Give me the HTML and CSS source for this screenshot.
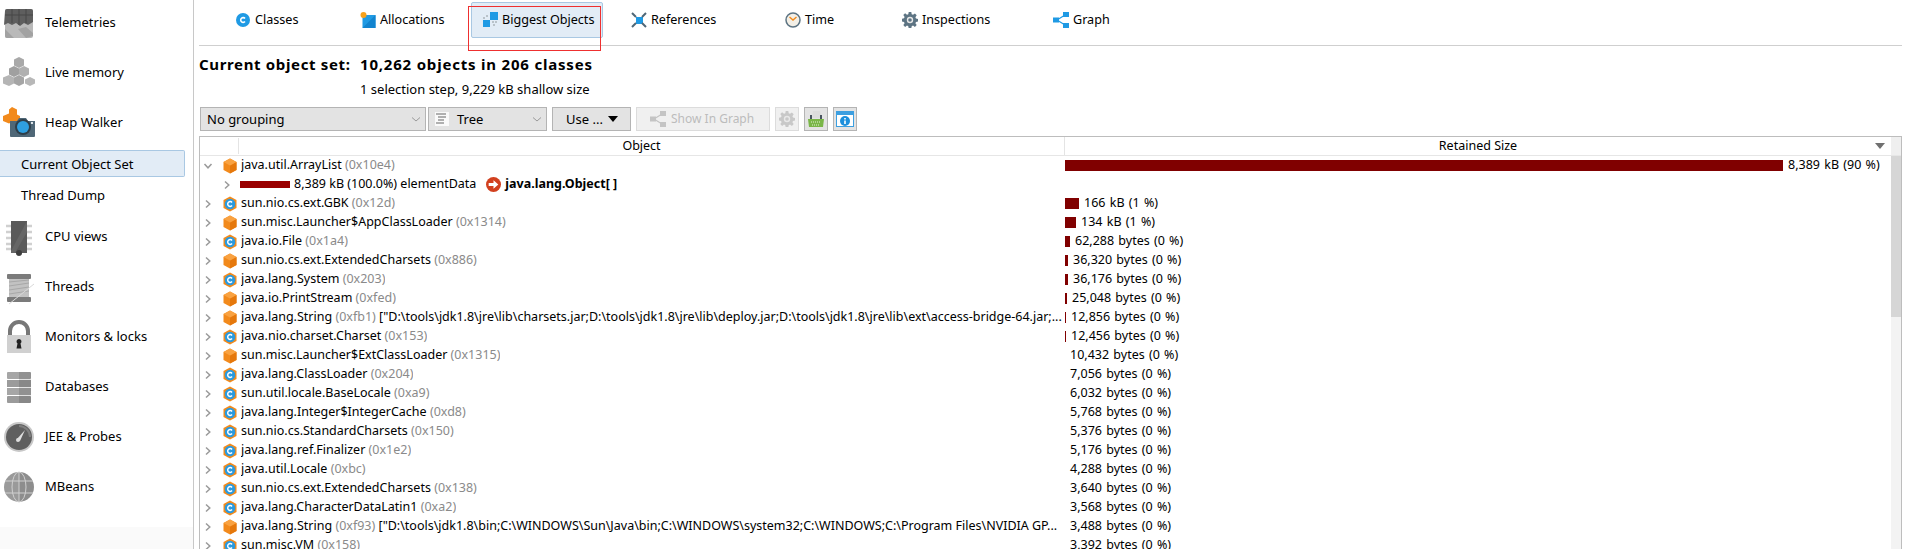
FILE: index.html
```html
<!DOCTYPE html>
<html lang="en">
<head>
<meta charset="utf-8">
<title>Heap Walker</title>
<link rel="stylesheet" href="styles.css">
</head>
<body>
<svg class="defs" aria-hidden="true">
  <symbol id="obj" viewBox="0 0 16 16"><path d="M8 .5 14.5 4v8L8 15.5 1.500 12V4z" fill="#f28a1c"/><path d="M8 7.500 14.500 4v8L8 15.500z" fill="#e5780c"/><path d="M8 .5 14.500 4 8 7.500 1.500 4z" fill="#f9a241"/></symbol>
  <symbol id="cls" viewBox="0 0 16 16"><path d="M8 .5 14.500 4v8L8 15.500 1.500 12V4z" fill="#f28a1c"/><circle cx="8" cy="8" r="5.300" fill="#2b9ade"/><path d="M10 6.500A2.400 2.400 0 1 0 10 9.500" fill="none" stroke="#fff" stroke-width="1.500"/></symbol>
  <symbol id="chev" viewBox="0 0 10 10"><path d="M3 1.500 6.800 5 3 8.500" fill="none" stroke="#9a9a9a" stroke-width="1.500"/></symbol>
  <symbol id="chevd" viewBox="0 0 10 10"><path d="M1.500 3 5 6.800 8.500 3" fill="none" stroke="#9a9a9a" stroke-width="1.500"/></symbol>
  <symbol id="caret" viewBox="0 0 10 10"><path d="M1 3.500 5 7 9 3.500" fill="none" stroke="#9a9a9a" stroke-width="1"/></symbol>
  <symbol id="graph" viewBox="0 0 16 16"><path d="M4 8 12 3M4 8l8 5" stroke="currentColor" stroke-width="1.200" fill="none"/><path d="M0 5.500h6v5H0zM10 0h6v5h-6zM10 11h6v5h-6z" fill="currentColor"/></symbol>
  <symbol id="gear" viewBox="0 0 16 16"><path d="M6.700 0h2.600l.4 2.200 1.300.6 1.900-1.300 1.800 1.800-1.300 1.900.6 1.300 2 .4v2.600l-2 .4-.6 1.300 1.300 1.900-1.800 1.800-1.900-1.300-1.300.6-.4 2.200H6.700l-.4-2.200-1.300-.6-1.900 1.300-1.800-1.800 1.300-1.900-.6-1.300-2-.4V6.700l2-.4.600-1.300-1.300-1.900 1.800-1.800L5 2.800l1.300-.6z" fill="currentColor"/><circle cx="8" cy="8" r="3.200" fill="#e8e8e8"/><circle cx="8" cy="8" r="1.800" fill="currentColor"/></symbol>
</svg>
<div class="app">
  <nav class="sidebar">
    <div class="side-item">
      <svg class="side-icon" viewBox="0 0 32 32"><g transform="translate(-1 0)"><rect x="3" y="2" width="28" height="29" rx="2" fill="#b9b9b9"/><path d="M3 4a2 2 0 0 1 2-2h24a2 2 0 0 1 2 2v11l-5 3-4-2-4 3-4-3-4 2-4-2-4 2z" fill="#5e5e5e"/><path d="M3 8h28M10 2v14M17 2v16M24 2v14" stroke="#474747"/><path d="M3 22l9 9H5a2 2 0 0 1-2-2zM16 22l8-2 7 6v3l-7 2z" fill="#a2a2a2"/></g></svg>
      <span>Telemetries</span>
    </div>
    <div class="side-item">
      <svg class="side-icon" viewBox="0 0 32 32"><path d="M16 0l5 2.500v6L16 11l-5-2.500v-6z" fill="#a9a9a9"/><path d="M11 9l5 2.500v6L11 20l-5-2.500v-6z" fill="#a0a0a0"/><path d="M21 9l5 2.500v6L21 20l-5-2.500v-6z" fill="#b0b0b0"/><path d="M6 18l5 2.500v6L6 29l-6-2.500v-6z" fill="#b5b5b5"/><path d="M16 18l5 2.500v6L16 29l-5-2.500v-6z" fill="#a5a5a5"/><path d="M27 20l5 2.500v4L27 29l-5-2.500v-4z" fill="#b8b8b8"/></svg>
      <span>Live memory</span>
    </div>
    <div class="side-item">
      <svg class="side-icon" viewBox="0 0 32 32"><path d="M9 0l5 2.500v5l3 1.500v5l-5 2.500-3-1.500-3 1.500-6-2.500v-5l6-2.500v-4z" fill="#f28a1c"/><path d="M7 14h7l2-3h7l2 3h7v15a1 1 0 0 1-1 1H8a1 1 0 0 1-1-1z" fill="#4f6777"/><circle cx="20" cy="20" r="8" fill="#2e3e49"/><circle cx="20" cy="20" r="6" fill="#2f9fe0"/><rect x="28" y="15" width="2" height="2" fill="#dfe5ea"/></svg>
      <span>Heap Walker</span>
    </div>
    <div class="sub-item sub-active">Current Object Set</div>
    <div class="sub-item sub-last">Thread Dump</div>
    <div class="side-item">
      <svg class="side-icon" viewBox="0 0 32 32"><path d="M3 5h26M3 11h26M3 17h26M3 23h26M3 28h26" stroke="#d0d0d0" stroke-width="2.500"/><rect x="8" y="0" width="16" height="32" fill="#5a5a5a"/><path d="M24 0v11L12 32H8V30z" fill="#6e6e6e" opacity=".6"/><circle cx="16" cy="32" r="3" fill="#3e3e3e"/></svg>
      <span>CPU views</span>
    </div>
    <div class="side-item">
      <svg class="side-icon" viewBox="0 0 32 32"><rect x="4" y="3" width="24" height="5" rx="1" fill="#7b7b7b"/><rect x="6" y="8" width="20" height="18" fill="#c2c2c2"/><path d="M6 11l20-2M6 15l20-3M6 19l20-3M6 23l20-3" stroke="#a8a8a8"/><rect x="4" y="26" width="24" height="5" rx="1" fill="#7b7b7b"/><path d="M6 33 31 13" stroke="#d9d9d9"/></svg>
      <span>Threads</span>
    </div>
    <div class="side-item">
      <svg class="side-icon" viewBox="0 0 32 32"><path d="M7 15V10a9 9 0 0 1 18 0v5" fill="none" stroke="#777" stroke-width="4"/><rect x="4" y="14" width="24" height="18" fill="#d0d0d0"/><path d="M16 18a2.500 2.500 0 0 1 1.500 4.500l1 5h-5l1-5A2.500 2.500 0 0 1 16 18z" fill="#222"/></svg>
      <span>Monitors &amp; locks</span>
    </div>
    <div class="side-item">
      <svg class="side-icon" viewBox="0 0 32 32"><rect x="4" y="1" width="24" height="7" rx="1" fill="#a6a6a6"/><rect x="4" y="9" width="24" height="7" fill="#9b9b9b"/><rect x="4" y="17" width="24" height="7" fill="#a6a6a6"/><rect x="4" y="25" width="24" height="7" rx="1" fill="#9b9b9b"/><path d="M16 1h11a1 1 0 0 1 1 1v29a1 1 0 0 1-1 1H16z" fill="#000" opacity=".12"/></svg>
      <span>Databases</span>
    </div>
    <div class="side-item">
      <svg class="side-icon" viewBox="0 0 32 32"><circle cx="16" cy="16" r="15" fill="#c8c8c8"/><circle cx="16" cy="16" r="13" fill="#5f5f5f"/><path d="M16 5a11 11 0 0 1 11 11" fill="none" stroke="#7e7e7e" stroke-width="2"/><path d="M14 18l8-9-5 11z" fill="#dedede"/><circle cx="15" cy="19" r="2" fill="#dedede"/></svg>
      <span>JEE &amp; Probes</span>
    </div>
    <div class="side-item">
      <svg class="side-icon" viewBox="0 0 32 32"><circle cx="16" cy="16" r="15" fill="#9a9a9a"/><path d="M16 1a15 15 0 0 1 0 30z" fill="#000" opacity=".08"/><path d="M2 10h28M2 22h28M16 1v30" stroke="#d0d0d0"/><ellipse cx="16" cy="16" rx="7" ry="15" fill="none" stroke="#d0d0d0"/></svg>
      <span>MBeans</span>
    </div>
    <div class="side-fill"></div>
  </nav>
  <main class="main">
    <div class="tabs">
      <div class="tab"><svg class="tab-icon" viewBox="0 0 16 16"><circle cx="8" cy="8" r="7" fill="#1f9ae4"/><path d="M10 6.500A2.400 2.400 0 1 0 10 9.500" fill="none" stroke="#fff" stroke-width="1.600"/></svg>Classes</div>
      <div class="tab"><svg class="tab-icon" viewBox="0 0 16 16"><rect x="2.500" y="3" width="13" height="13" fill="#1f9ae4"/><path d="M15.500 3v13H2.500z" fill="#1284cf"/><circle cx="3.500" cy="3" r="3" fill="#f7a11c"/></svg>Allocations</div>
      <div class="tab"><div class="tab-active"><svg class="tab-icon" viewBox="0 0 16 16"><rect x="8" y="0" width="8" height="8" fill="#1f9ae4"/><rect x="1" y="8" width="7" height="7" fill="#1f9ae4"/><path d="M4 3h2v2H4zM1 5h2v2H1zM10 9h2v2h-2zM13 9h2v2h-2zM11 12h2v2h-2z" fill="#b9c2c9"/></svg>Biggest Objects</div></div>
      <div class="tab"><svg class="tab-icon" viewBox="0 0 16 16"><rect x="5" y="5" width="7" height="7" fill="#1f9ae4"/><path d="M1 1l4 4M15 1l-4 4M1 15l4-4M15 15l-4-4" stroke="#4f6777" stroke-width="2"/></svg>References</div>
      <div class="tab"><svg class="tab-icon" viewBox="0 0 16 16"><circle cx="8" cy="8" r="7" fill="#f3efe6" stroke="#5d7483" stroke-width="1.500"/><path d="M4.500 5 8 8l3.500-3" fill="none" stroke="#f28a1c" stroke-width="1.400"/></svg>Time</div>
      <div class="tab"><svg class="tab-icon tab-gear"><use href="#gear"/></svg>Inspections</div>
      <div class="tab"><svg class="tab-icon tab-graph"><use href="#graph"/></svg>Graph</div>
    </div>
    <div class="summary">
      <div class="sum-title">Current object set:</div>
      <div class="sum-title sum-value">10,262 objects in 206 classes</div>
      <div></div>
      <div class="sum-sub">1 selection step, 9,229 kB shallow size</div>
    </div>
    <div class="toolbar">
      <div class="ctl ctl-group">No grouping<svg class="ctl-caret"><use href="#caret"/></svg></div>
      <div class="ctl ctl-tree"><svg class="tree-icon" viewBox="0 0 14 14"><rect width="14" height="14" fill="#fafafa"/><path d="M1 2h10M3 5h8M3 8h6M1 11h8" stroke="#666"/></svg>Tree<svg class="ctl-caret"><use href="#caret"/></svg></div>
      <div class="ctl ctl-use">Use ...<span class="use-arrow"></span></div>
      <div class="ctl ctl-show"><svg class="show-icon"><use href="#graph"/></svg>Show In Graph</div>
      <div class="ctl ctl-sq ctl-off"><svg class="sq-gear"><use href="#gear"/></svg></div>
      <div class="ctl ctl-sq"><svg class="sq-icon" viewBox="0 0 18 18"><path d="M6 1h7l2 7H5z" fill="#dcdcdc"/><path d="M3 5h2v4H3zM13 5h2v4h-2z" fill="#4a5560"/><path d="M1 9h16l-1 8H2z" fill="#7ab648"/><path d="M4 12h10M5 15h8" stroke="#e4f0d8" stroke-dasharray="1 1"/></svg></div>
      <div class="ctl ctl-sq"><svg class="sq-icon" viewBox="0 0 18 18"><rect x=".5" y="1.500" width="17" height="15" fill="#fff" stroke="#3c9fe0"/><rect x="1" y="2" width="16" height="3" fill="#3c9fe0"/><circle cx="9" cy="11" r="5" fill="#1c8fdc"/><path d="M9 8v1.500M9 10.500v3.500" stroke="#fff" stroke-width="1.600"/></svg></div>
    </div>
    <section class="table">
      <div class="thead">
        <div class="th-stub"></div>
        <div class="th th-object">Object</div>
        <div class="th th-size">Retained Size</div>
        <div class="th-corner"></div>
      </div>
      <div class="tbody">
        <div class="rows">
          <div class="row"><div class="obj"><svg class="tw"><use href="#chevd"/></svg><svg class="oi"><use href="#obj"/></svg><span class="nm">java.util.ArrayList <i>(0x10e4)</i></span></div><div class="size"><b class="bar" style="width:718px"></b><span>8,389 kB (90 %)</span></div></div>
          <div class="row"><div class="obj obj-child"><svg class="tw"><use href="#chev"/></svg><b class="cbar"></b><span class="cval">8,389 kB (100.0%) elementData</span><svg class="ref" viewBox="0 0 14 14"><circle cx="7" cy="7" r="7" fill="#d2401f"/><path d="M2.500 5.500h4.500V3l4.500 4L7 11V8.500H2.500z" fill="#fff"/></svg><strong>java.lang.Object[ ]</strong></div><div class="size"></div></div>
          <div class="row"><div class="obj"><svg class="tw"><use href="#chev"/></svg><svg class="oi"><use href="#cls"/></svg><span class="nm">sun.nio.cs.ext.GBK <i>(0x12d)</i></span></div><div class="size"><b class="bar" style="width:14px"></b><span>166 kB (1 %)</span></div></div>
          <div class="row"><div class="obj"><svg class="tw"><use href="#chev"/></svg><svg class="oi"><use href="#obj"/></svg><span class="nm">sun.misc.Launcher$AppClassLoader <i>(0x1314)</i></span></div><div class="size"><b class="bar" style="width:11px"></b><span>134 kB (1 %)</span></div></div>
          <div class="row"><div class="obj"><svg class="tw"><use href="#chev"/></svg><svg class="oi"><use href="#cls"/></svg><span class="nm">java.io.File <i>(0x1a4)</i></span></div><div class="size"><b class="bar" style="width:5px"></b><span>62,288 bytes (0 %)</span></div></div>
          <div class="row"><div class="obj"><svg class="tw"><use href="#chev"/></svg><svg class="oi"><use href="#obj"/></svg><span class="nm">sun.nio.cs.ext.ExtendedCharsets <i>(0x886)</i></span></div><div class="size"><b class="bar" style="width:3px"></b><span>36,320 bytes (0 %)</span></div></div>
          <div class="row"><div class="obj"><svg class="tw"><use href="#chev"/></svg><svg class="oi"><use href="#cls"/></svg><span class="nm">java.lang.System <i>(0x203)</i></span></div><div class="size"><b class="bar" style="width:3px"></b><span>36,176 bytes (0 %)</span></div></div>
          <div class="row"><div class="obj"><svg class="tw"><use href="#chev"/></svg><svg class="oi"><use href="#obj"/></svg><span class="nm">java.io.PrintStream <i>(0xfed)</i></span></div><div class="size"><b class="bar" style="width:2px"></b><span>25,048 bytes (0 %)</span></div></div>
          <div class="row"><div class="obj"><svg class="tw"><use href="#chev"/></svg><svg class="oi"><use href="#obj"/></svg><span class="nm">java.lang.String <i>(0xfb1)</i> ["D:\tools\jdk1.8\jre\lib\charsets.jar;D:\tools\jdk1.8\jre\lib\deploy.jar;D:\tools\jdk1.8\jre\lib\ext\access-bridge-64.jar;...</span></div><div class="size"><b class="bar" style="width:1px"></b><span>12,856 bytes (0 %)</span></div></div>
          <div class="row"><div class="obj"><svg class="tw"><use href="#chev"/></svg><svg class="oi"><use href="#cls"/></svg><span class="nm">java.nio.charset.Charset <i>(0x153)</i></span></div><div class="size"><b class="bar" style="width:1px"></b><span>12,456 bytes (0 %)</span></div></div>
          <div class="row"><div class="obj"><svg class="tw"><use href="#chev"/></svg><svg class="oi"><use href="#obj"/></svg><span class="nm">sun.misc.Launcher$ExtClassLoader <i>(0x1315)</i></span></div><div class="size size-nobar"><span>10,432 bytes (0 %)</span></div></div>
          <div class="row"><div class="obj"><svg class="tw"><use href="#chev"/></svg><svg class="oi"><use href="#cls"/></svg><span class="nm">java.lang.ClassLoader <i>(0x204)</i></span></div><div class="size size-nobar"><span>7,056 bytes (0 %)</span></div></div>
          <div class="row"><div class="obj"><svg class="tw"><use href="#chev"/></svg><svg class="oi"><use href="#cls"/></svg><span class="nm">sun.util.locale.BaseLocale <i>(0xa9)</i></span></div><div class="size size-nobar"><span>6,032 bytes (0 %)</span></div></div>
          <div class="row"><div class="obj"><svg class="tw"><use href="#chev"/></svg><svg class="oi"><use href="#cls"/></svg><span class="nm">java.lang.Integer$IntegerCache <i>(0xd8)</i></span></div><div class="size size-nobar"><span>5,768 bytes (0 %)</span></div></div>
          <div class="row"><div class="obj"><svg class="tw"><use href="#chev"/></svg><svg class="oi"><use href="#cls"/></svg><span class="nm">sun.nio.cs.StandardCharsets <i>(0x150)</i></span></div><div class="size size-nobar"><span>5,376 bytes (0 %)</span></div></div>
          <div class="row"><div class="obj"><svg class="tw"><use href="#chev"/></svg><svg class="oi"><use href="#cls"/></svg><span class="nm">java.lang.ref.Finalizer <i>(0x1e2)</i></span></div><div class="size size-nobar"><span>5,176 bytes (0 %)</span></div></div>
          <div class="row"><div class="obj"><svg class="tw"><use href="#chev"/></svg><svg class="oi"><use href="#cls"/></svg><span class="nm">java.util.Locale <i>(0xbc)</i></span></div><div class="size size-nobar"><span>4,288 bytes (0 %)</span></div></div>
          <div class="row"><div class="obj"><svg class="tw"><use href="#chev"/></svg><svg class="oi"><use href="#cls"/></svg><span class="nm">sun.nio.cs.ext.ExtendedCharsets <i>(0x138)</i></span></div><div class="size size-nobar"><span>3,640 bytes (0 %)</span></div></div>
          <div class="row"><div class="obj"><svg class="tw"><use href="#chev"/></svg><svg class="oi"><use href="#cls"/></svg><span class="nm">java.lang.CharacterDataLatin1 <i>(0xa2)</i></span></div><div class="size size-nobar"><span>3,568 bytes (0 %)</span></div></div>
          <div class="row"><div class="obj"><svg class="tw"><use href="#chev"/></svg><svg class="oi"><use href="#obj"/></svg><span class="nm">java.lang.String <i>(0xf93)</i> ["D:\tools\jdk1.8\bin;C:\WINDOWS\Sun\Java\bin;C:\WINDOWS\system32;C:\WINDOWS;C:\Program Files\NVIDIA GP...</span></div><div class="size size-nobar"><span>3,488 bytes (0 %)</span></div></div>
          <div class="row"><div class="obj"><svg class="tw"><use href="#chev"/></svg><svg class="oi"><use href="#cls"/></svg><span class="nm">sun.misc.VM <i>(0x158)</i></span></div><div class="size size-nobar"><span>3,392 bytes (0 %)</span></div></div>
        </div>
        <div class="scroll"><div class="thumb"></div></div>
      </div>
    </section>
    <div class="red-box"></div>
  </main>
</div>
</body>
</html>
```
FILE: styles.css
```css
* { box-sizing: border-box; }
html, body { margin: 0; height: 549px; overflow: hidden; background: #fff; }
body { font: 12.500px/18px "Noto Sans", "Open Sans", sans-serif; color: #000; }
.defs { display: block; width: 0; height: 0; }

.app { display: flex; height: 549px; }

.sidebar { width: 194px; flex: none; border-right: 1px solid #c8c8c8; display: flex; flex-direction: column; gap: 4px; }
.side-item { height: 46px; flex: none; display: flex; align-items: center; gap: 10px; padding-left: 3px; font-size: 13px; }
.side-item span { margin-bottom: 2px; }
.side-icon { width: 32px; height: 32px; flex: none; overflow: visible; }
.sub-item { height: 27px; flex: none; display: flex; align-items: center; padding-left: 21px; width: 185px; font-size: 13px; }
.sub-active { background: #e2ecf6; border: 1px solid #a9c8e3; border-left: 0; border-radius: 0 2px 2px 0; }
.sub-last { margin-bottom: 2px; }
.side-fill { flex: 1; margin-top: 2px; background: linear-gradient(#fff 0, #fff 11px, #fafafa 11px); }

.main { flex: 1; min-width: 0; padding: 0 5px 0 5px; display: flex; flex-direction: column; position: relative; }

.tabs { height: 46px; flex: none; padding: 2px 0 0 26px; border-bottom: 1px solid #cfcfcf; display: grid; grid-template-columns: 125px 121px 150px 154px 117px 151px auto; font-size: 12.600px; }
.tab { height: 36px; padding-left: 10px; display: flex; align-items: center; gap: 4px; }
.tab:nth-child(3) { padding-left: 0; }
.tab-active { width: 132px; height: 36px; padding-left: 10px; display: flex; align-items: center; gap: 4px; background: #e2ecf6; border: 1px solid #a9c8e3; border-radius: 2px; }
.tab-icon { width: 16px; height: 16px; flex: none; }
.tab-gear { color: #5d7483; }
.tab-graph { color: #1f9ae4; }

.summary { flex: none; padding-top: 8px; display: grid; grid-template-columns: 161px 1fr; }
.sum-title { height: 20px; font-weight: 700; font-size: 15px; line-height: 20px; letter-spacing: .65px; white-space: nowrap; }
.sum-value { letter-spacing: .8px; }
.sum-sub { margin-top: 6px; height: 18px; font-size: 13px; }

.toolbar { flex: none; height: 24px; margin: 9px 0 5px 1px; display: flex; font-size: 13px; }
.ctl { height: 24px; flex: none; display: flex; align-items: center; background: #e3e3e3; border: 1px solid #b4b4b4; }
.ctl-group { width: 226px; padding-left: 6px; justify-content: space-between; padding-right: 4px; margin-right: 2px; }
.ctl-tree { width: 119px; padding-left: 6px; gap: 8px; margin-right: 5px; padding-right: 4px; }
.ctl-caret { width: 10px; height: 10px; }
.ctl-tree .ctl-caret { margin-left: auto; }
.tree-icon { width: 14px; height: 14px; }
.ctl-use { width: 79px; padding-left: 13px; gap: 5px; margin-right: 5px; }
.use-arrow { width: 0; height: 0; border: 5px solid transparent; border-top: 6px solid #000; border-bottom: 0; }
.ctl-show { width: 134px; padding-left: 13px; gap: 5px; margin-right: 5px; background: #f0f0f0; border-color: #dcdcdc; color: #bcbcbc; font-size: 12px; }
.show-icon { width: 16px; height: 16px; color: #c4c4c4; }
.ctl-sq { width: 24px; margin-right: 5px; justify-content: center; }
.ctl-off { background: #f0f0f0; border-color: #dcdcdc; }
.sq-gear { width: 16px; height: 16px; color: #c8c8c8; }
.sq-icon { width: 18px; height: 18px; }

.table { flex: 1; min-height: 0; border: 1px solid #bdbdbd; border-bottom: 0; display: flex; flex-direction: column; }
.thead { flex: none; height: 19px; display: flex; border-bottom: 1px solid #e6e6e6; }
.th-stub { width: 39px; flex: none; border-right: 1px solid #e4e4e4; margin: 1px 0; }
.th { display: flex; align-items: center; justify-content: center; }
.th-object { width: 826px; flex: none; padding-right: 20px; border-right: 1px solid #e4e4e4; }
.th-size { flex: 1; position: relative; }
.th-size::after { content: ""; position: absolute; right: 6px; top: 6px; border: 5px solid transparent; border-top: 6px solid #707070; border-bottom: 0; }
.th-corner { width: 10px; flex: none; background: #efefef; }

.tbody { flex: 1; min-height: 0; display: flex; overflow: hidden; }
.rows { flex: 1; min-width: 0; }
.row { height: 19px; display: grid; grid-template-columns: 865px 1fr; align-items: center; white-space: nowrap; }
.obj { height: 19px; display: flex; align-items: center; padding-left: 3px; min-width: 0; overflow: hidden; }
.tw { width: 10px; height: 10px; flex: none; margin-right: 10px; }
.oi { width: 16px; height: 16px; flex: none; margin-right: 3px; margin-left: -1px; }
.nm { overflow: hidden; padding-bottom: 2px; }
.nm i { font-style: normal; color: #8a8a8a; }
.obj-child { padding-left: 22px; }
.obj-child .tw { margin-right: 8px; }
.cbar { width: 50px; height: 7px; flex: none; background: #9a0000; margin-right: 4px; }
.cval { margin-right: 10px; padding-bottom: 2px; }
.obj-child strong { padding-bottom: 2px; }
.ref { width: 15px; height: 15px; flex: none; margin-right: 4px; }
.size { display: flex; align-items: center; gap: 5px; height: 19px; word-spacing: 1px; }
.size span { padding-bottom: 2px; }
.size-nobar { padding-left: 5px; }
.bar { height: 11px; flex: none; background: #800000; }

.scroll { width: 10px; flex: none; background: #f3f3f3; }
.thumb { height: 161px; background: #d6d6d6; }

.red-box { position: absolute; left: 274px; top: 6px; width: 133px; height: 45px; border: 1px solid #ee3030; }
```
